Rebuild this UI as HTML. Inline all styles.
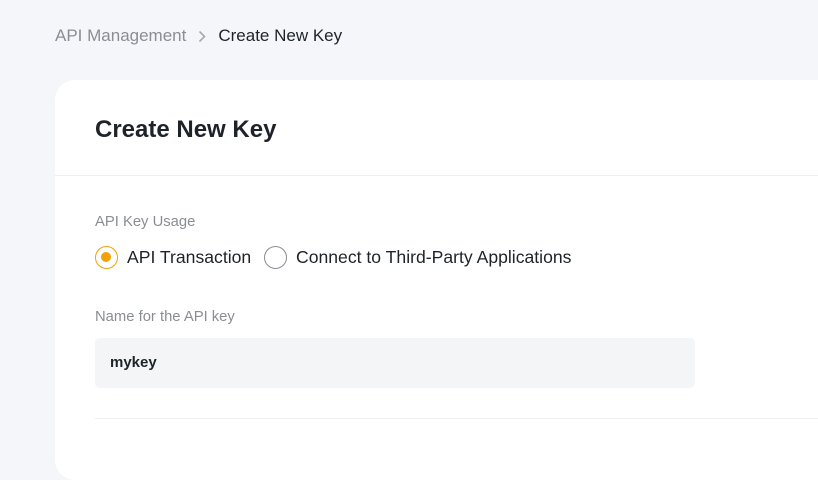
<!DOCTYPE html>
<html><head><meta charset="utf-8"><style>
*{margin:0;padding:0;box-sizing:border-box}
body{width:818px;height:432px;overflow:hidden;background:#f5f6fa;font-family:"Liberation Sans",sans-serif;position:relative}
.bc{position:absolute;top:26px;left:55px;font-size:17px;color:#8a8d93;white-space:nowrap;line-height:20px}
.bc .cur{color:#1e2329}
.bc svg{vertical-align:-2px;margin:0 12px 0 12px}
.card{position:absolute;left:55px;top:80px;width:800px;height:400px;background:#fff;border-radius:20px}
h1{position:absolute;left:40px;top:36px;font-size:24px;font-weight:bold;color:#1e2329}
.hr{position:absolute;left:0;right:0;top:95px;height:1px;background:#eeeff1}
.lbl{position:absolute;left:40px;font-size:14.8px;color:#8a8d93}
.radio{position:absolute;top:166px;width:23px;height:23px;border-radius:50%;border:1.5px solid #8a8d93}
.radio.on{border-color:#f0a20b}
.radio.on::after{content:"";position:absolute;left:5px;top:5px;width:10px;height:10px;border-radius:50%;background:#f0a20b}
.rt{position:absolute;top:166px;font-size:17.6px;color:#1e2329;line-height:23px;white-space:nowrap}
.inp{position:absolute;left:40px;top:258px;width:600px;height:50px;background:#f4f5f7;border-radius:5px;font-size:15px;font-weight:bold;color:#1e2329;padding:16px 15px}
.hr2{position:absolute;left:40px;right:0;top:338px;height:1px;background:#eeeff1}
</style></head><body>
<div class="bc">API Management<svg width="8" height="13" viewBox="0 0 8 13"><path d="M1.5 1.5 L6.5 6.5 L1.5 11.5" fill="none" stroke="#a6a9ae" stroke-width="1.6"/></svg><span class="cur">Create New Key</span></div>
<div class="card">
<h1>Create New Key</h1>
<div class="hr"></div>
<div class="lbl" style="top:134px">API Key Usage</div>
<div class="radio on" style="left:40px"></div>
<div class="rt" style="left:72px">API Transaction</div>
<div class="radio" style="left:209px"></div>
<div class="rt" style="left:241px">Connect to Third-Party Applications</div>
<div class="lbl" style="top:229px">Name for the API key</div>
<div class="inp">mykey</div>
<div class="hr2"></div>
</div>
</body></html>
